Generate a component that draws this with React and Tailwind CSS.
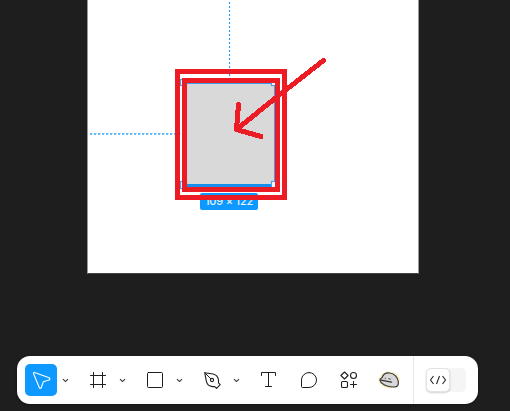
import React from "react";

function Icon({ children, className = "" }) {
  return (
    <span className={`flex h-8 w-8 shrink-0 items-center justify-center rounded-[5px] ${className}`}>
      <svg width="32" height="32" viewBox="0 0 32 32" fill="none" stroke="currentColor" strokeLinecap="round" strokeLinejoin="round">
        {children}
      </svg>
    </span>
  );
}

function Chevron() {
  return (
    <span className="flex h-8 w-[17px] shrink-0 items-center justify-center">
      <svg width="17" height="32" viewBox="0 0 17 32" fill="none" stroke="#333" strokeWidth="1.1">
        <path d="M6 15.2 8.5 17.6 11 15.2" />
      </svg>
    </span>
  );
}

function Tool({ children, className }) {
  return (
    <div className="flex">
      <Icon className={className}>{children}</Icon>
      <Chevron />
    </div>
  );
}

function Toolbar() {
  return (
    <div className="mx-[17px] flex h-12 w-[461px] items-center rounded-[13px] bg-white pl-2 text-[#1e1e1e] shadow-[0_1px_3px_rgba(0,0,0,0.35)]">
      <div className="flex gap-2">
        <Tool className="bg-[#0d99ff] text-white">
          <path d="M8.5 9.5c-.3-.8.4-1.4 1.1-1.1l14.5 5.4c1 .4 1 1.8 0 2.1l-5.8 1.9-2.1 5.9c-.3.9-1.4.9-1.8 0z" strokeWidth="1.1" />
        </Tool>
        <Tool>
          <path d="M11.5 8.5v15M20.5 8.5v15M8.5 11.5h15M8.5 20.5h15" strokeWidth="1" />
        </Tool>
        <Tool>
          <rect x="8.5" y="8.5" width="15" height="15" rx="1" strokeWidth="1" />
        </Tool>
        <Tool>
          <path d="M8.7 8.7 17.2 10c3.2.8 5 3.4 5.3 6.2v2.6l1.7 1.8-3.6 3.7-1.9-1.7h-2.3c-3.2-.4-5.3-2.3-6-5.3z" strokeWidth="1.1" />
          <path d="m9 9 5.8 5.8" strokeWidth="1" />
          <circle cx="16" cy="16" r="1.6" strokeWidth="1.1" />
        </Tool>
        <Icon>
          <path d="M8.5 11.5v-3h14v3M15.5 8.5v14M12.5 22.5h6" strokeWidth="1" />
        </Icon>
        <Icon>
          <path d="M16 8.5a7.5 7.5 0 1 1 0 15H9.5a1 1 0 0 1-1-1V16A7.5 7.5 0 0 1 16 8.5Z" strokeWidth="1" />
        </Icon>
        <Icon>
          <path d="m11.5 8 3.6 3.5-3.6 3.5-3.6-3.5z" strokeWidth="1.1" />
          <circle cx="20.5" cy="11.5" r="3" strokeWidth="1.1" />
          <rect x="8.5" y="17.5" width="6" height="6" rx="1.3" strokeWidth="1.1" />
          <path d="M20.5 17.5v6M17.5 20.5h6" strokeWidth="1" />
        </Icon>
        <Icon>
          <ellipse cx="16.3" cy="16" rx="10" ry="8" fill="#fff4cf" stroke="#ffe8a0" strokeWidth="1" strokeDasharray="1 2" />
          <path d="M7 16.3c-.3-1.2.8-2 2-2.5 1.3-4 4.3-5.3 8-4.8 4.3.4 7.7 4.6 8.3 8.5.5 3.7-.9 5.6-4 5.5-4.7.1-9-.8-12.1-3.6C8 18.5 7.1 17.5 7 16.3Z" fill="#d7d7d9" stroke="#343434" strokeWidth="1.2" />
          <path d="m8 16.2 10.5 2" stroke="#333" strokeWidth="1.3" />
          <path d="M12.3 14.2v.2M16 14.8l1.3.3" stroke="#333" strokeWidth="1" />
        </Icon>
      </div>
      <div className="ml-2 h-full w-px bg-[#e6e6e6]" />
      <div className="ml-3 flex h-6 w-10 rounded-[5px] bg-[#f5f5f5]">
        <div className="flex h-6 w-6 items-center justify-center rounded-[5px] border border-[#e3e3e3] bg-white shadow-[0_1px_2px_rgba(0,0,0,0.18)]">
          <svg width="18" height="12" viewBox="0 0 18 12" className="shrink-0" fill="none" stroke="#252525" strokeWidth="1.1">
            <path d="M4.5 2 1.5 6l3 4M13.5 2l3 4-3 4M10.5 2l-3 8" />
          </svg>
        </div>
      </div>
    </div>
  );
}

function Artboard() {
  return (
    <div className="relative ml-[87px] h-[274px] w-[332px] border-x border-b border-x-[#999] border-b-[#444] bg-white">
      <div className="absolute top-[193px] left-[112px] flex h-[17px] w-[58px] items-center justify-center rounded-[2px] bg-[#0d99ff] font-[Inter,sans-serif] text-[11px] leading-none font-medium tracking-[-0.2px] whitespace-nowrap text-[#e3f3ff]">
        109 × 122
      </div>
      <svg className="absolute top-0 left-[-88px]" width="510" height="273" viewBox="0 0 510 273" fill="none">
        <path d="M229.5 2v74" stroke="#2b9df5" strokeWidth="1.2" strokeDasharray="2 2" />
        <path d="M90 133.5h97" stroke="#a8d7fb" strokeWidth="1" strokeDasharray="3 1" />
        <path d="M88 134h99" stroke="#65baf8" strokeWidth="2" strokeDasharray="2 2" strokeDashoffset="2" />
        <path d="M187 83h88v104h-88z" fill="#d9d9d9" />
        <path d="M187 83.5h87.5V187" stroke="#3c9dea" />
        <path d="M187 185.5h88" stroke="#168fee" strokeWidth="3" />
        <g fill="#fff" stroke="#3fa4f3" strokeWidth="1.2">
          <rect x="180.5" y="79.5" width="6" height="6" />
          <rect x="271.5" y="79.5" width="6" height="6" />
          <rect x="180.5" y="181.5" width="6" height="7" />
          <rect x="271.5" y="181.5" width="6" height="7" />
        </g>
        <g stroke="#ed1c24" strokeWidth="5">
          <rect x="177.5" y="71.5" width="107" height="126" />
          <rect x="184.5" y="80.5" width="93" height="109" />
          <path d="m323.5 60.500-48 37.500-39 31.500 2-25M236.500 129.500l24.500 7" strokeLinecap="round" strokeLinejoin="round" shapeRendering="crispEdges" />
        </g>
      </svg>
    </div>
  );
}

export default function App() {
  return (
    <main className="flex h-[411px] w-[510px] flex-col overflow-hidden bg-[#1e1e1e]">
      <Artboard />
      <div className="mt-[82px]">
        <Toolbar />
      </div>
    </main>
  );
}
